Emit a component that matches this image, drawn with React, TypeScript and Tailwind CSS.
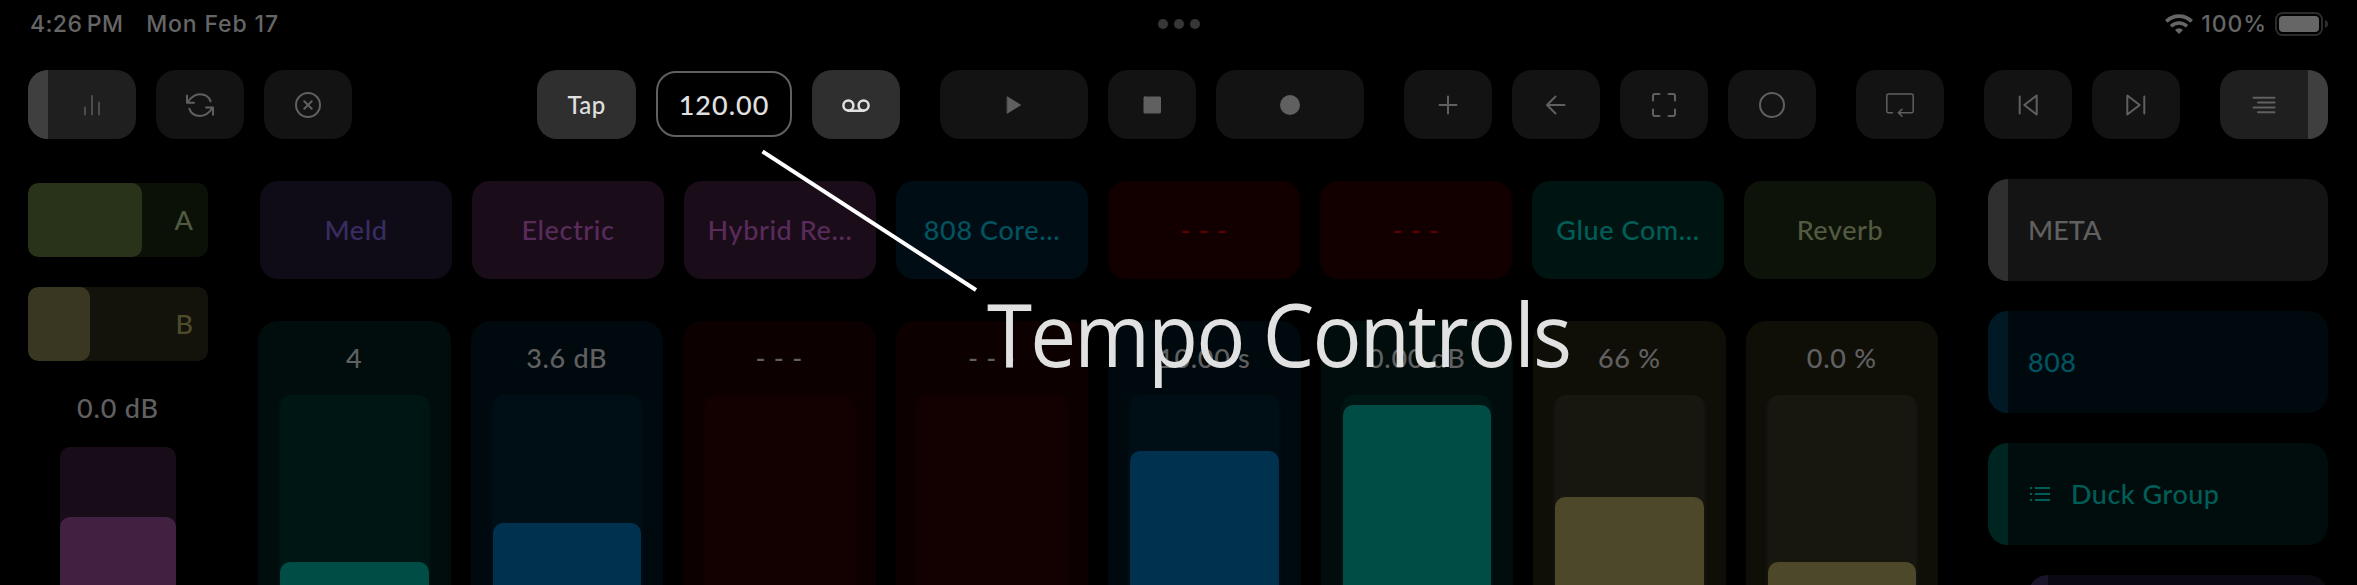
import type { ReactNode } from "react";

function Icon({ children, w = 2 }: { children: ReactNode; w?: number }) {
  return (
    <svg
      className="h-10 w-10 shrink-0"
      viewBox="-20 -20 40 40"
      fill="none"
      stroke="currentColor"
      strokeWidth={w}
      strokeLinecap="round"
      strokeLinejoin="round"
    >
      {children}
    </svg>
  );
}

function Btn({ className = "w-[88px]", children }: { className?: string; children: ReactNode }) {
  return (
    <button className={`flex h-[69px] shrink-0 items-center justify-center rounded-[20px] bg-[#131313] text-[#606060] ${className}`}>
      {children}
    </button>
  );
}

function StatusBar() {
  return (
    <header className="flex h-12 items-center pl-[30px] pr-[29px] font-['Inter',sans-serif] text-[23px] font-medium text-[#666]">
      <div className="flex flex-1 gap-[23px] whitespace-pre">
        <span className="tracking-[0.4px]">4:26<span className="text-[15px]"> </span>PM</span>
        <span className="tracking-[0.85px]">Mon Feb 17</span>
      </div>
      <div className="flex gap-[6px]">
        <i className="size-[10px] rounded-full bg-[#363636]" />
        <i className="size-[10px] rounded-full bg-[#363636]" />
        <i className="size-[10px] rounded-full bg-[#363636]" />
      </div>
      <div className="flex flex-1 items-center justify-end">
        <svg className="mr-[8px] h-5 w-7" viewBox="0 0 28 20" fill="none" stroke="#666" strokeWidth="3.6">
          <path d="M1.3 7.4a18 18 0 0 1 25.4 0" />
          <path d="M6 12.3a11.4 11.4 0 0 1 16 0" />
          <path d="M14 20l-4-4.1a5.7 5.7 0 0 1 8 0z" fill="#666" stroke="none" />
        </svg>
        <span className="tracking-[0.9px]">100%</span>
        <svg className="ml-[8px] h-6 w-[53px]" viewBox="0 0 53 24">
          <rect x="1" y="1" width="46" height="22" rx="6.5" fill="none" stroke="#2b2b2b" strokeWidth="2" />
          <rect x="4" y="4" width="40" height="16" rx="4" fill="#666" />
          <path d="M50 8c4 1.500 4 6.500 0 8z" fill="#2f2f2f" />
        </svg>
      </div>
    </header>
  );
}

function Toolbar() {
  return (
    <nav className="mt-[22px] flex h-[69px] pl-7 font-['Lato',sans-serif]">
      <div className="flex gap-5">
        <button className="flex w-[108px] overflow-hidden rounded-[20px] bg-[#1f1f1f] text-[#4d4d4d]">
          <span className="h-[69px] w-5 bg-[#3f3f3f]" />
          <span className="flex h-[69px] flex-1 items-center justify-center">
            <Icon><path d="M-7 2.500V9.500M0-9V9.500M7-2.500V9.500" /></Icon>
          </span>
        </button>
        <Btn>
          <Icon>
            <path d="M-13-9.500V-2.200H-6M-12.500-2.500C-9-8-5.500-10.700 0-10.700C5-10.700 9-8 10.600-3.600" />
            <path d="M13 9.700V2.400H6M12.500 2.700C9 8.200 5.500 10.900 0 10.900C-5 10.900-9 8.200-10.600 3.800" />
          </Icon>
        </Btn>
        <Btn>
          <Icon>
            <circle r="12" />
            <path d="M-3.700-3.700L3.700 3.700M3.700-3.700L-3.700 3.700" />
          </Icon>
        </Btn>
      </div>
      <div className="ml-[185px] flex gap-5">
        <Btn className="w-[99px] bg-[#2f2f2f]! text-[24px] font-medium tracking-[0.3px] text-[#e0e0e0]!">Tap</Btn>
        <div className="mt-px flex h-[66px] w-[136px] items-center justify-center rounded-[20px] border-2 border-[#606060] pt-[2px] text-[27px] font-medium tracking-[1px] text-[#e0e0e0]">
          120.00
        </div>
        <Btn className="w-[88px] bg-[#2f2f2f]! text-[#e0e0e0]!">
          <Icon w={2.5}>
            <circle cx="-7.600" cy="0.500" r="5" />
            <circle cx="7.600" cy="0.500" r="5" />
            <path d="M-7.600 5.700H7.600" />
          </Icon>
        </Btn>
      </div>
      <div className="ml-10 flex gap-5">
        <Btn className="w-[148px]">
          <Icon w={1}><path d="M-6.500-8L6.500 0L-6.500 8z" fill="currentColor" /></Icon>
        </Btn>
        <Btn><Icon w={1}><rect x="-8" y="-8" width="16.500" height="16" rx="0.500" fill="currentColor" /></Icon></Btn>
        <Btn className="w-[148px]"><Icon w={0}><circle r="10" fill="currentColor" /></Icon></Btn>
      </div>
      <div className="ml-10 flex gap-5">
        <Btn><Icon><path d="M-8.500 0H8.500M0-8.500V8.500" /></Icon></Btn>
        <Btn><Icon><path d="M8.500 0H-8.500M-0.500-8.500L-9 0L-0.500 8.500" /></Icon></Btn>
        <Btn>
          <Icon>
            <path d="M-11-4.500V-9a2 2 0 0 1 2-2h4.500M11-4.500V-9a2 2 0 0 0-2-2h-4.500M-11 4.500V9a2 2 0 0 0 2 2h4.500M11 4.500V9a2 2 0 0 1-2 2h-4.500" />
          </Icon>
        </Btn>
        <Btn><Icon><circle r="12" /></Icon></Btn>
      </div>
      <div className="ml-10 flex">
        <Btn>
          <Icon w={1.5}>
            <path d="M-7.500 7.700H-11.700a1.500 1.500 0 0 1-1.500-1.500V-9.500a1.500 1.500 0 0 1 1.500-1.500H11.700a1.500 1.500 0 0 1 1.500 1.500V6.200a1.500 1.500 0 0 1-1.500 1.500H-1.500M2 4.200L-1.700 7.700L2 11.200" />
          </Icon>
        </Btn>
      </div>
      <div className="ml-10 flex gap-5">
        <Btn><Icon><path d="M-8.300-8.500V8.500M8.700-9.500V9.500L-3.700 0z" /></Icon></Btn>
        <Btn><Icon><path d="M8.300-8.500V8.500M-8.700-9.500V9.500L3.700 0z" /></Icon></Btn>
      </div>
      <button className="ml-10 flex w-[108px] overflow-hidden rounded-[20px] bg-[#1f1f1f] text-[#606060]">
        <span className="flex h-[69px] flex-1 items-center justify-center">
          <Icon><path d="M-10.500-7.200H10.500M-6-2.400H10.500M-10.500 2.400H10.500M-6 7.200H10.500" /></Icon>
        </span>
        <span className="h-[69px] w-5 bg-[#3f3f3f]" />
      </button>
    </nav>
  );
}

function Mixer() {
  return (
    <aside className="flex w-[180px] shrink-0 flex-col pt-1">
      <div className="flex h-[74px] shrink-0 overflow-hidden rounded-[10px] bg-[#0c1107] text-[#525a41]">
        <div className="w-[114px] rounded-[10px] bg-[#28331a]" />
        <div className="flex flex-1 items-center justify-end pr-[15px]">A</div>
      </div>
      <div className="mt-[30px] flex h-[74px] shrink-0 overflow-hidden rounded-[10px] bg-[#13130b] text-[#4e4b2b]">
        <div className="w-[62px] rounded-[10px] bg-[#393722]" />
        <div className="flex flex-1 items-center justify-end pr-[15px]">B</div>
      </div>
      <div className="mt-[29px] h-9 shrink-0 text-center leading-9 tracking-[0.8px] text-[#606060]">0.0 dB</div>
      <div className="mt-[21px] flex h-[200px] w-[116px] shrink-0 flex-col self-center rounded-[10px] bg-[#180c18] pt-[70px]">
        <div className="flex-1 rounded-t-[10px] bg-[#422042]" />
      </div>
    </aside>
  );
}

const devices = [
  { name: "Meld", box: "bg-[#0f0c18] text-[#3a2c61]" },
  { name: "Electric", box: "bg-[#1a0d19] text-[#592b5b]" },
  { name: "Hybrid Re...", box: "bg-[#1a0d19] text-[#592b5b]" },
  { name: "808 Core...", box: "bg-[#000d15] text-[#00535f]" },
  { name: "- - -", box: "bg-[#120000] text-[#5c0000]" },
  { name: "- - -", box: "bg-[#120000] text-[#5c0000]" },
  { name: "Glue Com...", box: "bg-[#001412] text-[#005e58]" },
  { name: "Reverb", box: "bg-[#0e1309] text-[#525a41]" },
];

const faders = [
  { value: "4", box: "bg-[#000d0c]", track: "border-[#00110f] bg-[#001614]", fill: "bg-[#004d45]", top: 167 },
  { value: "3.6 dB", box: "bg-[#00090e]", track: "border-[#000c12] bg-[#000e15]", fill: "bg-[#00324f]", top: 128 },
  { value: "- - -", box: "bg-[#0d0000]", track: "border-[#100000] bg-[#130000]", fill: "", top: 0 },
  { value: "- - -", box: "bg-[#0d0000]", track: "border-[#100000] bg-[#130000]", fill: "", top: 0 },
  { value: "10.00 s", box: "bg-[#00090e]", track: "border-[#000c12] bg-[#000e15]", fill: "bg-[#00324f]", top: 56 },
  { value: "0.00 dB", box: "bg-[#000d0c]", track: "border-[#00110f] bg-[#001614]", fill: "bg-[#004d45]", top: 10 },
  { value: "66 %", box: "bg-[#0f0f08]", track: "border-[#13130d] bg-[#17170f]", fill: "bg-[#4d482a]", top: 102 },
  { value: "0.0 %", box: "bg-[#0f0f08]", track: "border-[#13130d] bg-[#17170f]", fill: "bg-[#4d482a]", top: 167 },
];

function Rack() {
  return (
    <section className="ml-[50px] w-[1680px] shrink-0 pt-0.5">
      <div className="flex gap-5 pl-0.5">
        {devices.map((d, i) => (
          <div key={i} className={`flex h-[98px] w-[192px] shrink-0 items-center justify-center rounded-[18px] tracking-[0.6px] whitespace-pre ${d.box}`}>
            {d.name}
          </div>
        ))}
      </div>
      <div className="mt-[42px] grid grid-cols-8 gap-5">
        {faders.map((f, i) => (
          <div key={i} className={`flex h-[300px] flex-col rounded-t-[20px] px-5 pt-[19px] ${f.box}`}>
            <div className="h-9 text-center leading-9 tracking-[0.7px] whitespace-pre text-[#606060]">{f.value}</div>
            <div className={`mt-[19px] flex flex-1 flex-col rounded-t-[12px] border-x-2 ${f.track}`} style={{ paddingTop: f.top }}>
              <div className={`flex-1 rounded-t-[10px] ${f.fill}`} />
            </div>
          </div>
        ))}
      </div>
    </section>
  );
}

function Tracks() {
  return (
    <aside className="ml-[50px] flex w-[340px] shrink-0 flex-col gap-[30px]">
      <div className="flex h-[102px] shrink-0 items-center overflow-hidden rounded-[20px] bg-[#141414] text-[#606060]">
        <span className="mr-5 h-full w-5 bg-[#2f2f2f]" />META
      </div>
      <div className="flex h-[102px] shrink-0 items-center overflow-hidden rounded-[20px] bg-[#00090e] tracking-[0.5px] text-[#00535f]">
        <span className="mr-5 h-full w-5 bg-[#001924]" />808
      </div>
      <div className="flex h-[102px] shrink-0 items-center overflow-hidden rounded-[20px] bg-[#000d0c] tracking-[0.5px] text-[#005e58]">
        <span className="mr-[22px] h-full w-5 bg-[#002521]" />
        <svg className="mr-[21px] h-4 w-5" viewBox="0 0 20 16" stroke="currentColor" strokeWidth="2">
          <path d="M0 2h2M5 2h15M0 8h2M5 8h15M0 14h2M5 14h15" />
        </svg>
        Duck Group
      </div>
      <div className="ml-10 flex h-[102px] shrink-0 overflow-hidden rounded-[20px] bg-[#0a0810]">
        <span className="h-full w-5 bg-[#1a1329]" />
      </div>
    </aside>
  );
}

export default function App() {
  return (
    <div className="relative h-[585px] w-[2357px] overflow-hidden bg-black">
      <StatusBar />
      <Toolbar />
      <main className="mt-10 flex h-[406px] overflow-hidden pl-7 font-['Lato',sans-serif] text-[27px] font-medium">
        <Mixer />
        <Rack />
        <Tracks />
      </main>
      <svg className="absolute top-[140px] left-[750px] h-40 w-60" viewBox="750 140 240 160">
        <path d="M762.500 151.500L976 290" stroke="#fff" strokeWidth="4" />
      </svg>
      <div className="absolute top-[273px] left-[987px] origin-left scale-x-[0.94] font-['Open_Sans','Noto_Sans',sans-serif] text-[87px] leading-[120px] font-medium tracking-[-2px] whitespace-nowrap text-[#e1e1e1]">
        Tempo Controls
      </div>
    </div>
  );
}
